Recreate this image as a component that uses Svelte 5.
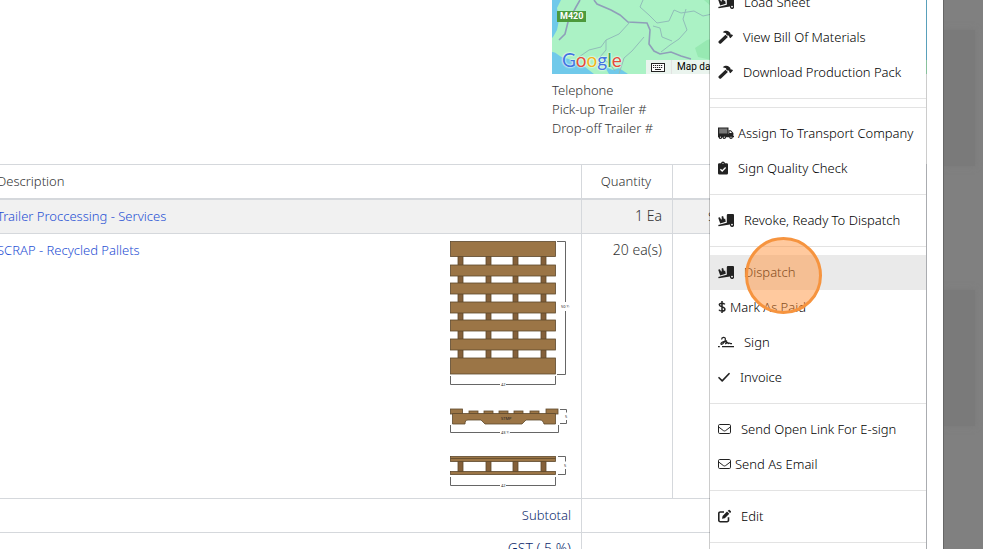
<script>
  const groups = [
    [
      { label: 'Load Sheet', icon: 'ramp' },
      { label: 'View Bill Of Materials', icon: 'hammer' },
      { label: 'Download Production Pack', icon: 'hammer' },
    ],
    [],
    [
      { label: 'Assign To Transport Company', icon: 'truck', tight: true },
      { label: 'Sign Quality Check', icon: 'clipboard' },
    ],
    [{ label: 'Revoke, Ready To Dispatch', icon: 'ramp' }],
    [
      { label: 'Dispatch', icon: 'ramp', active: true },
      { label: 'Mark As Paid', icon: 'dollar', tight: true },
      { label: 'Sign', icon: 'signature' },
      { label: 'Invoice', icon: 'check' },
    ],
    [
      { label: 'Send Open Link For E-sign', icon: 'envelope' },
      { label: 'Send As Email', icon: 'envelope', tight: true },
    ],
    [{ label: 'Edit', icon: 'edit' }],
    [],
  ];

  const widths = {
    ramp: 16,
    hammer: 15,
    truck: 16,
    clipboard: 10,
    dollar: 8,
    signature: 16,
    check: 12,
    envelope: 13,
    edit: 13,
  };

  const slats = [24, 42, 61, 79, 98];
  const stringers = [8, 36, 63, 91];
  const blocks = [19, 34, 49, 64, 80];
</script>

{#snippet glyph(name)}
  <svg class="icon" width={widths[name]} height="14" viewBox="0 0 {widths[name]} 14" aria-hidden="true">
    {#if name === 'ramp'}
      <path d="M10 1h5a1 1 0 0 1 1 1v8.600a2.200 2.200 0 1 1-4 1L.6 13.300.2 11.900 8.800 9.700V2.200A1.200 1.200 0 0 1 10 1z" />
      <path d="M.2 4.800l1.600-.5 1.300 2.300.7-.3L3.600 3.400l1.500-.4.9 2.900 1.100-.3.7 3.200-5.600 1.600z" />
      <circle cx="14" cy="11.600" r=".9" fill="#fff" />
    {:else if name === 'hammer'}
      <path d="M4.800 2.200C6.800.2 9.700.3 11.300 1.900l1.100 1.100v1.100l.7.600.7-.4 1.200 1.200-2.600 2.700-1.300-1.200.2-.8-.8-.8H9.200L8.100 4.300V3.200z" />
      <path d="M7.500 4.700l2.400 2.400-6.600 6.200a1.500 1.500 0 0 1-2.100 0l-.3-.3a1.500 1.500 0 0 1 0-2.100z" />
    {:else if name === 'truck'}
      <path d="M.6 2h9.300v6H.6z" fill="#777" stroke="#222" stroke-width="1.200" />
      <path d="M0 8h10.500V4.200h2.400L15.400 7v3h.6v1.200H0z" />
      <path d="M11.500 5.300h1l1.500 1.800h-2.500z" fill="#fff" />
      <g fill="#fff" stroke="#222" stroke-width="1.200">
        <circle cx="2.500" cy="11.200" r="1.200" />
        <circle cx="6.300" cy="11.200" r="1.200" />
        <circle cx="13" cy="11.200" r="1.200" />
      </g>
    {:else if name === 'clipboard'}
      <path d="M1.300 2.300h1.800a1.900 1.900 0 0 1 3.800 0h1.800A1.300 1.300 0 0 1 10 3.600v8.600a1.300 1.300 0 0 1-1.300 1.300H1.300A1.300 1.300 0 0 1 0 12.200V3.600a1.300 1.300 0 0 1 1.300-1.300z" />
      <path d="M2.400 8.200l1.800 1.800 3.400-3.500" fill="none" stroke="#fff" stroke-width="1.300" />
      <circle cx="5" cy="2.500" r=".6" fill="#fff" />
    {:else if name === 'dollar'}
      <path d="M4 1v12M6.800 4.300C6.200 3.300 1.300 2.400 1.300 4.800c0 2.600 5.600 1.600 5.600 4.400 0 2.700-5.200 2.100-5.900.6" fill="none" stroke="#222" stroke-width="1.500" />
    {:else if name === 'signature'}
      <path d="M3.600 4.600C3.600 1.900 7.400 1.700 7.400 4 7.400 6.300 5.200 9.200 3.600 9.300 2.200 9.300 3 7.500 5 6.900l3.600-1L7.600 8.800l2.100-1.500.4 1.300 1.500-.6 1 .7h1.400" fill="none" stroke="#222" stroke-width="1.200" stroke-linejoin="round" />
      <path d="M0 11h1.800v1.200H0zM4 11h12v1.200H4z" />
    {:else if name === 'check'}
      <path d="M1 7.700l3.200 3.200L11 3.700" fill="none" stroke="#222" stroke-width="1.600" stroke-linecap="round" stroke-linejoin="round" />
    {:else if name === 'envelope'}
      <rect x=".5" y="2.500" width="12" height="9" rx="1.200" fill="none" stroke="#222" />
      <path d="M.7 5l4.700 3.600c.7.500 1.500.5 2.200 0L12.300 5" fill="none" stroke="#222" />
    {:else if name === 'edit'}
      <path d="M6 3H2.300A1.500 1.500 0 0 0 .8 4.500v6.700a1.500 1.500 0 0 0 1.500 1.500H9a1.500 1.500 0 0 0 1.500-1.500V8.300" fill="none" stroke="#222" stroke-width="1.600" />
      <path d="M9 2.500L11.300 4.800 6.800 9.200 4 9.800 4.600 7zM9.700 1.800l.7-.6a1.100 1.100 0 0 1 1.500 0l.8.8a1.100 1.100 0 0 1 0 1.500l-.7.600z" />
    {/if}
  </svg>
{/snippet}

<div class="screen">
  <main class="paper">
    <section class="delivery">
      <div class="contact">
        <div class="map">
          <svg viewBox="0 0 375 74" preserveAspectRatio="xMinYMin slice" role="img" aria-label="Map">
            <rect width="375" height="74" fill="#abf2c5" />
            <g fill="#70c9ea">
              <path d="M0 0h9L5 8 7 20 5 30 1 37 0 38z" />
              <path d="M0 52c5 0 7 5 13 6 8 2 12 6 20 9l9 7H0z" />
              <path d="M53 67l8 3 6-2 9 6H57z" />
              <path d="M366 0h9v60h-5z" />
            </g>
            <path d="M143 48l12-8 4-1v21l-13-3zM152 0h8v7z" fill="#97e9b2" />
            <g fill="none" stroke="#8f9fb9" stroke-width="1.600">
              <path d="M28 0l-4 7-8 15-3 12-6 6" />
              <path d="M42 0l3 4 14 6 9 5 8 7 19 1 3 7-1 14 5 7 6 3 11-2 10 4 10 3" />
            </g>
            <g fill="none" stroke="#91bdb9">
              <path d="M78 22L67 34l-13 6-5 7-12 3-10 7" />
              <path d="M54 40v10l-6 7 9 6 6 8" />
              <path d="M91 0l-3 7 9 8 8 8 12-2 5-11 7 3 13-2 9 5 9-2" />
              <path d="M134 9l-3 10 4 11-8 9-9 6-9 7" />
              <path d="M101 26l7 2 2 9 10 4" />
              <path d="M92 37L80 51l-8 7-5 16" />
            </g>
          </svg>
          <span class="road">M420</span>
          <span class="brand"><i class="b">G</i><i class="r">o</i><i class="y">o</i><i class="b">g</i><i class="g">l</i><i class="r">e</i></span>
          <span class="credits">
            <svg width="14" height="9" viewBox="0 0 14 9" aria-hidden="true">
              <rect x=".5" y=".5" width="13" height="8" fill="#fff" stroke="#222" />
              <path d="M2 2.500h10M2 4.500h10" stroke="#222" stroke-width="1.200" stroke-dasharray="1.200 .8" />
              <path d="M4 6.500h6" stroke="#222" />
            </svg>
            <span>Map data</span>
          </span>
        </div>
        <div class="lines">
          <div>Telephone</div>
          <div>Pick-up Trailer #</div>
          <div>Drop-off Trailer #</div>
        </div>
      </div>
    </section>

    <table>
      <colgroup>
        <col />
        <col class="qty-col" />
        <col class="amount-col" />
      </colgroup>
      <thead>
        <tr>
          <th class="desc">Description</th>
          <th class="qty">Quantity</th>
          <th></th>
        </tr>
      </thead>
      <tbody>
        <tr class="striped">
          <td><a href="#services">Trailer Proccessing - Services</a></td>
          <td class="num">1 Ea</td>
          <td class="price">$</td>
        </tr>
        <tr>
          <td>
            <div class="product">
              <a href="#pallets">SCRAP - Recycled Pallets</a>
              <svg width="121" height="249" viewBox="0 0 121 249" role="img" aria-label="Pallet drawing">
                <g fill="#9b7546" stroke="#5e492c" stroke-width=".8">
                  {#each stringers as x}
                    <rect {x} y="15" width="5" height="104" fill="#84603a" />
                    <rect {x} y="220" width="5" height="11" fill="#84603a" />
                  {/each}
                  <rect x=".5" y=".5" width="105" height="15" />
                  {#each slats as y}
                    <rect x=".5" {y} width="105" height="11" />
                  {/each}
                  <rect x=".5" y="117" width="105" height="16" />

                  {#each blocks as x}
                    <rect {x} y="170" width="9" height="3" />
                  {/each}
                  <rect x=".5" y="168" width="12" height="5" />
                  <rect x="96" y="168" width="12" height="5" />
                  <path d="M2.500 172.500h103v10.500H94c-1-3-2-4-4-4H76l-4 4H35l-4-4H18c-2 0-3 1-3 4H2.500z" />

                  <rect x=".5" y="215.500" width="105" height="5" />
                  <path d="M.5 217.500h105" />
                  <rect x=".5" y="230.500" width="105" height="3" />
                </g>
                <g fill="none" stroke="#666">
                  <path d="M107 .5h8.500V61M115.500 70v63.500H107M.5 135v8.500H50M56 143.500h49.500V135" />
                  <path d="M.5 184v7.500H50M60 191.500h48.500V184M110 168.500h6.500v3M116.500 179v3.500H110" />
                  <path d="M.5 236v8.500H50M56 244.500h49.500V236M108 215.500h7.500v5M115.500 228v5.500H108" />
                </g>
                <g class="dims">
                  <text x="111" y="67">50 ½</text>
                  <text x="51" y="145">42</text>
                  <text x="51" y="193">43 ½</text>
                  <text x="51" y="246">42</text>
                  <text x="51" y="179">STMP</text>
                  <text x="115" y="177">5</text>
                  <text x="114" y="226">5</text>
                </g>
              </svg>
            </div>
          </td>
          <td class="num">20 ea(s)</td>
          <td></td>
        </tr>
        <tr class="total">
          <td>Subtotal</td>
          <td colspan="2"></td>
        </tr>
        <tr class="total tax">
          <td>GST ( 5 %)</td>
          <td colspan="2"></td>
        </tr>
      </tbody>
    </table>

    <div class="menu">
      {#each groups as items}
        <ul>
          {#each items as item}
            <li>
              <button type="button" class:active={item.active} class:tight={item.tight}>
                {@render glyph(item.icon)}
                {item.label}
              </button>
              {#if item.active}
                <span class="highlight"></span>
              {/if}
            </li>
          {/each}
        </ul>
      {/each}
    </div>
  </main>
  <aside class="backdrop">
    <div></div>
    <div></div>
  </aside>
</div>

<style>
  .screen {
    display: flex;
    height: 100vh;
    overflow: hidden;
    font-family: 'Noto Sans', 'Open Sans', sans-serif;
    font-size: 13px;
    font-weight: 300;
    color: #333;
    background: #fff;
  }

  .paper {
    position: relative;
    flex: 1;
    min-width: 0;
    padding-right: 16px;
  }

  .backdrop {
    display: flex;
    flex-direction: column;
    gap: 124px;
    box-sizing: border-box;
    width: 40px;
    padding: 30px 8px 0 0;
    overflow: hidden;
    background: #808080;
    border-left: 1px solid #666;
  }

  .backdrop div {
    height: 136px;
    background: #7a7a7a;
    box-shadow: 0 0 6px #7a7a7a;
  }

  .delivery {
    display: flex;
    justify-content: flex-end;
    padding-bottom: 26px;
  }

  .contact {
    width: 375px;
  }

  .map {
    position: relative;
    height: 74px;
    overflow: hidden;
  }

  .map > svg {
    display: block;
    width: 100%;
    height: 100%;
  }

  .road {
    position: absolute;
    top: 11px;
    left: 5px;
    padding: 0 3px;
    font: 700 9px/11px Roboto, sans-serif;
    color: #fff;
    background: #4c9a3c;
  }

  .brand {
    position: absolute;
    top: 48px;
    left: 10px;
    font: 400 19px/24px Lato, sans-serif;
    text-shadow: 0 0 2px #fff, 0 0 2px #fff;
  }

  .brand i {
    font-style: normal;
  }

  .b {
    color: #4274e0;
  }

  .r {
    color: #e24b3b;
  }

  .y {
    color: #efb41c;
  }

  .g {
    color: #35a053;
  }

  .credits {
    position: absolute;
    left: 94px;
    bottom: 0;
    display: flex;
    align-items: center;
    gap: 6px;
    height: 14px;
    padding: 0 5px;
    font: 400 10px/14px Roboto, sans-serif;
    color: #000;
    background: rgba(245, 245, 245, 0.85);
  }

  .credits span {
    padding-left: 5px;
    border-left: 1px solid #e2e2e2;
  }

  .lines {
    padding-top: 7px;
    line-height: 19px;
  }

  table {
    width: calc(100% + 12px);
    margin-left: -12px;
    table-layout: fixed;
    border-collapse: collapse;
    line-height: 18px;
  }

  .qty-col {
    width: 91px;
  }

  .amount-col {
    width: 254px;
  }

  th,
  td {
    padding: 7px 10px 8px 8px;
    border: 1px solid #d5d8dc;
    vertical-align: top;
    font-weight: 300;
    text-align: left;
  }

  th {
    border-bottom-width: 2px;
  }

  th.qty {
    text-align: center;
  }

  td.num {
    font-size: 14px;
    text-align: right;
  }

  td.price {
    padding-left: 35px;
  }

  .striped {
    background: #f1f1f1;
  }

  .total td {
    text-align: right;
    color: #0d2a6c;
  }

  .tax td {
    font-size: 14px;
  }

  td a {
    color: #1f50d4;
    text-decoration: none;
  }

  .product {
    display: flex;
    justify-content: space-between;
    align-items: flex-start;
  }

  .product svg {
    display: block;
  }

  .dims {
    font-size: 4px;
    font-weight: 400;
    fill: #222;
  }

  .menu {
    position: absolute;
    top: -24px;
    right: 16px;
    box-sizing: border-box;
    width: 218px;
    color: #000;
    background: #fff;
    background-clip: padding-box;
    border: 1px solid rgba(0, 0, 0, 0.2);
  }

  ul {
    margin: 0;
    padding: 8px 0;
    list-style: none;
  }

  ul:empty {
    padding: 4px 0;
  }

  ul + ul {
    border-top: 1px solid #e3e3e3;
  }

  li {
    position: relative;
  }

  button {
    display: flex;
    align-items: center;
    gap: 10px;
    width: 100%;
    height: 35px;
    padding: 0 8px 2px;
    font: inherit;
    color: inherit;
    white-space: nowrap;
    text-align: left;
    background: none;
    border: 0;
    cursor: pointer;
  }

  button.tight {
    gap: 4px;
  }

  button.active,
  button:hover {
    background: #eaeaea;
  }

  .icon {
    flex: none;
    fill: #222;
  }

  .highlight {
    position: absolute;
    top: -18px;
    left: 35px;
    z-index: 1;
    box-sizing: border-box;
    width: 77px;
    height: 77px;
    background: rgba(255, 148, 61, 0.5);
    border: 3px solid #f6943f;
    border-radius: 50%;
    pointer-events: none;
  }
</style>
